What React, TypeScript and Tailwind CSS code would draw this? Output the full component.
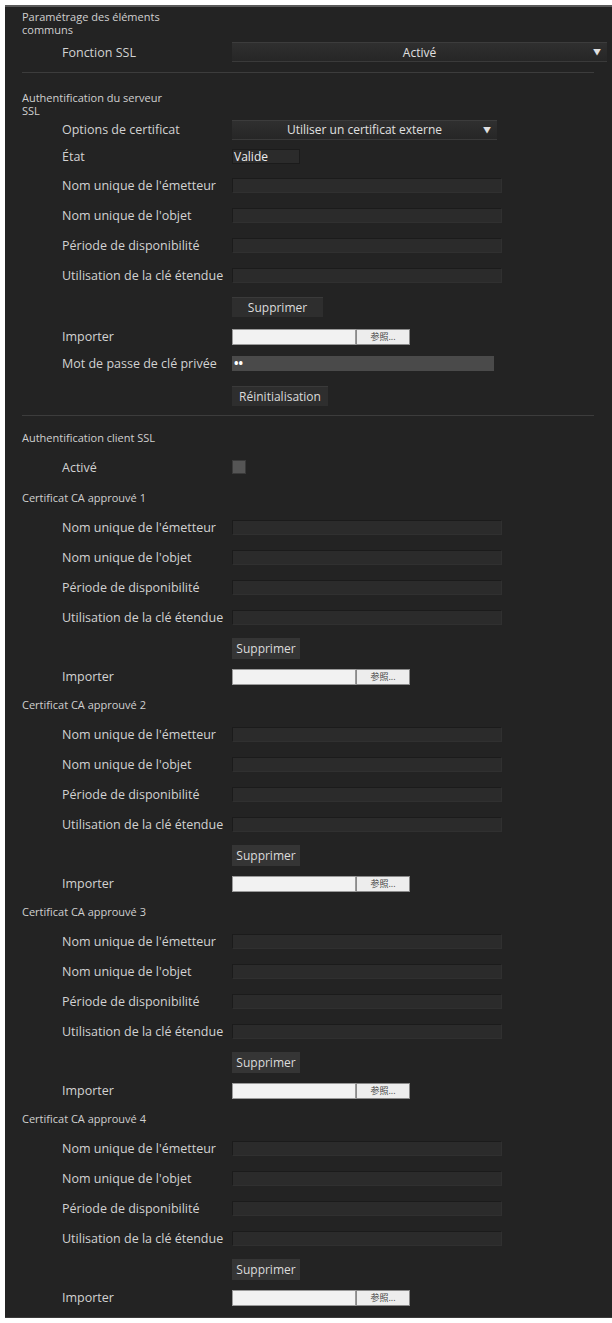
const font = "font-['Open_Sans','Noto_Sans_CJK_JP',sans-serif]";

function Row({ label, children, h = "h-[30px]" }: { label: string; children?: React.ReactNode; h?: string }) {
  return (
    <div className={`flex items-center ${h}`}>
      <div className="w-[210px] shrink-0 pl-[40px] whitespace-nowrap text-[12.5px] text-[#d2d2d2]">{label}</div>
      <div className="flex items-center">{children}</div>
    </div>
  );
}

function TextBox({ w = "w-[270px]" }: { w?: string }) {
  return <div className={`${w} h-[15px] bg-[#2b2b2b] border border-[#1b1b1b] border-b-[#303030] border-r-[#303030]`} />;
}

function FileInput() {
  return (
    <div className="flex items-center">
      <div className="w-[124px] h-[16px] bg-[#f2f2f2] border border-[#9a9a9a]" />
      <div className="w-[54px] h-[16px] bg-[#ededed] border border-[#8a8a8a] flex items-center justify-center text-[9px] text-[#444]">
        参照...
      </div>
    </div>
  );
}

function Button({ children, w }: { children: React.ReactNode; w: string }) {
  return (
    <div className={`${w} h-[20px] bg-[#2e2e2e] border-t border-[#3a3a3a] flex items-center justify-center text-[12px] text-[#dcdcdc]`}>
      {children}
    </div>
  );
}

function Select({ value, w }: { value: string; w: string }) {
  return (
    <div className={`${w} h-[20px] relative flex items-center justify-center text-[12px] text-[#e0e0e0] bg-gradient-to-b from-[#2f2f2f] to-[#262626] border-t border-[#3c3c3c] border-b border-b-[#3a3a3a]`}>
      <span>{value}</span>
      <span className="absolute right-[6px] top-[4px] text-[8px] leading-[10px]">▼</span>
    </div>
  );
}

function CaBlock({ n }: { n: number }) {
  return (
    <div className="flex flex-col">
      <div className="h-[30px] flex items-center">Certificat CA approuvé {n}</div>
      <Row label="Nom unique de l'émetteur"><TextBox /></Row>
      <Row label="Nom unique de l'objet"><TextBox /></Row>
      <Row label="Période de disponibilité"><TextBox /></Row>
      <Row label="Utilisation de la clé étendue"><TextBox /></Row>
      <Row label="" h="h-[32px]">
        <div className="w-[68px] h-[21px] bg-[#353535] flex items-center justify-center text-[12px] text-[#dcdcdc]">Supprimer</div>
      </Row>
      <Row label="Importer" h="h-[25px]"><FileInput /></Row>
    </div>
  );
}

export default function App() {
  return (
    <div className={`min-h-[1323px] bg-white pt-[5px] pl-[5px] ${font}`}>
      <div className="bg-[#232323] border-t-2 border-[#5a5a5a] border-b border-b-[#3a3a3a] h-[1313px] pl-[17px] pr-[12px] text-[11px] leading-[15px] text-[#d0d0d0]">
        <div className="pt-[3px]">
          <div className="h-[13px] leading-[13px]">Paramétrage des éléments</div>
          <div className="h-[13px] leading-[13px]">communs</div>
        </div>
        <Row label="Fonction SSL" h="h-[32px]">
          <Select value="Activé" w="w-[375px]" />
        </Row>
        <div className="mt-[4px] h-px bg-[#3c3c3c] mr-[6px]" />
        <div className="pt-[18px]">
          <div className="h-[13px] leading-[13px]">Authentification du serveur</div>
          <div className="h-[13px] leading-[13px]">SSL</div>
        </div>
        <Row label="Options de certificat" h="h-[25px]">
          <Select value="Utiliser un certificat externe" w="w-[265px]" />
        </Row>
        <Row label="État" h="h-[28px]">
          <div className="w-[68px] h-[15px] bg-[#2b2b2b] border border-[#1b1b1b] flex items-center pl-[1px] text-[12px] text-[#eee]">Valide</div>
        </Row>
        <Row label="Nom unique de l'émetteur"><TextBox /></Row>
        <Row label="Nom unique de l'objet"><TextBox /></Row>
        <Row label="Période de disponibilité"><TextBox /></Row>
        <Row label="Utilisation de la clé étendue"><TextBox /></Row>
        <Row label="" h="h-[33px]">
          <Button w="w-[91px]">Supprimer</Button>
        </Row>
        <Row label="Importer" h="h-[27px]"><FileInput /></Row>
        <Row label="Mot de passe de clé privée" h="h-[27px]">
          <div className="w-[262px] h-[15px] bg-[#4a4a4a] flex items-center pl-[2px] text-white text-[12px] font-bold">••</div>
        </Row>
        <Row label="" h="h-[38px]">
          <Button w="w-[96px]">Réinitialisation</Button>
        </Row>
        <div className="h-px bg-[#3c3c3c] mr-[6px]" />
        <div className="h-[36px] flex items-center pt-[6px]">Authentification client SSL</div>
        <Row label="Activé">
          <div className="w-[14px] h-[14px] bg-[#555] border border-[#3a3a3a]" />
        </Row>
        <CaBlock n={1} />
        <CaBlock n={2} />
        <CaBlock n={3} />
        <CaBlock n={4} />
      </div>
    </div>
  );
}
